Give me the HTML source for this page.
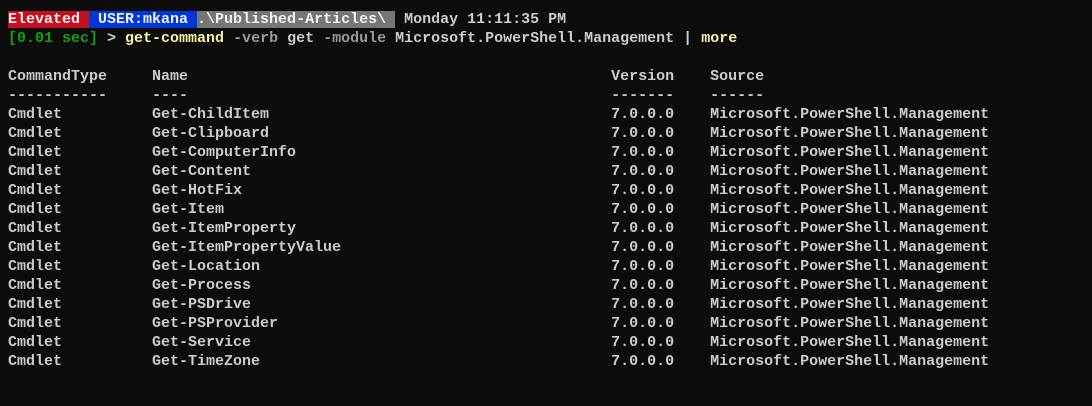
<!DOCTYPE html>
<html><head><style>
html,body{margin:0;background:#0c0c0c;width:1092px;height:406px;overflow:hidden}
pre{margin:0;position:absolute;left:8px;top:10px;font-family:"Liberation Mono",monospace;font-size:15px;font-weight:bold;line-height:19px;color:#cccccc;letter-spacing:0}
.r{background:#c50f1f;color:#f2f2f2}.b{background:#0037da;color:#f2f2f2}.g{background:#767676;color:#f2f2f2}
.gr{color:#13a10e}.y{color:#f9f1a5}.d{color:#9a9a9a}
</style></head><body>
<pre><span class="r">Elevated </span><span class="b"> USER:mkana </span><span class="g">.\Published-Articles\ </span> Monday 11:11:35 PM
<span class="gr">[0.01 sec]</span> &gt; <span class="y">get-command</span> <span class="d">-verb</span> get <span class="d">-module</span> Microsoft.PowerShell.Management | <span class="y">more</span>

CommandType     Name                                               Version    Source
-----------     ----                                               -------    ------
Cmdlet          Get-ChildItem                                      7.0.0.0    Microsoft.PowerShell.Management
Cmdlet          Get-Clipboard                                      7.0.0.0    Microsoft.PowerShell.Management
Cmdlet          Get-ComputerInfo                                   7.0.0.0    Microsoft.PowerShell.Management
Cmdlet          Get-Content                                        7.0.0.0    Microsoft.PowerShell.Management
Cmdlet          Get-HotFix                                         7.0.0.0    Microsoft.PowerShell.Management
Cmdlet          Get-Item                                           7.0.0.0    Microsoft.PowerShell.Management
Cmdlet          Get-ItemProperty                                   7.0.0.0    Microsoft.PowerShell.Management
Cmdlet          Get-ItemPropertyValue                              7.0.0.0    Microsoft.PowerShell.Management
Cmdlet          Get-Location                                       7.0.0.0    Microsoft.PowerShell.Management
Cmdlet          Get-Process                                        7.0.0.0    Microsoft.PowerShell.Management
Cmdlet          Get-PSDrive                                        7.0.0.0    Microsoft.PowerShell.Management
Cmdlet          Get-PSProvider                                     7.0.0.0    Microsoft.PowerShell.Management
Cmdlet          Get-Service                                        7.0.0.0    Microsoft.PowerShell.Management
Cmdlet          Get-TimeZone                                       7.0.0.0    Microsoft.PowerShell.Management
</pre>
</body></html>
